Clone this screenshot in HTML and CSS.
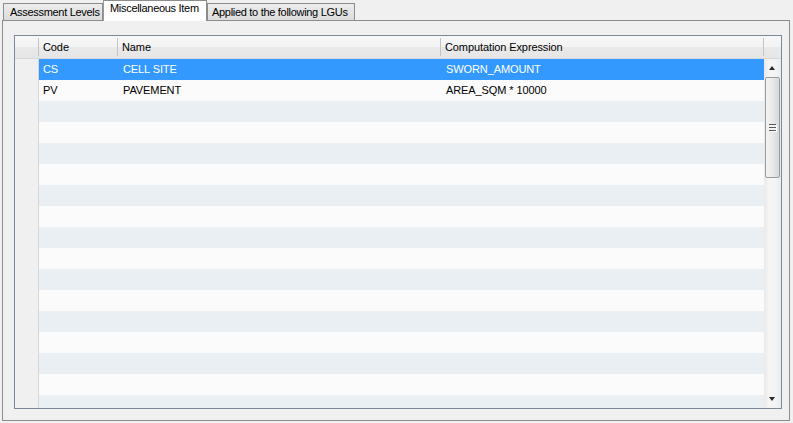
FILE: index.html
```html
<!DOCTYPE html>
<html>
<head>
<meta charset="utf-8">
<link rel="stylesheet" href="styles.css">
</head>
<body>
<div class="window">
  <div class="tabs">
    <div class="tab tab-1">Assessment Levels</div>
    <div class="tab tab-active tab-2">Miscellaneous Item</div>
    <div class="tab tab-3">Applied to the following LGUs</div>
  </div>
  <div class="panel">
    <div class="grid">
      <div class="head">
        <div class="hcell h-corner"></div>
        <div class="hcell h-code">Code</div>
        <div class="hcell h-name">Name</div>
        <div class="hcell h-expr">Computation Expression</div>
        <div class="hcell h-scroll"></div>
      </div>
      <div class="body">
        <div class="rowheads"></div>
        <div class="rows">
          <div class="row selected"><span class="c-code">CS</span><span class="c-name">CELL SITE</span><span class="c-expr">SWORN_AMOUNT</span></div>
          <div class="row"><span class="c-code">PV</span><span class="c-name">PAVEMENT</span><span class="c-expr">AREA_SQM * 10000</span></div>
          <div class="row alt"></div>
          <div class="row"></div>
          <div class="row alt"></div>
          <div class="row"></div>
          <div class="row alt"></div>
          <div class="row"></div>
          <div class="row alt"></div>
          <div class="row"></div>
          <div class="row alt"></div>
          <div class="row"></div>
          <div class="row alt"></div>
          <div class="row"></div>
          <div class="row alt"></div>
          <div class="row"></div>
          <div class="row alt"></div>
        </div>
        <div class="scrollbar">
          <div class="arrow arrow-up"></div>
          <div class="thumb"><div class="grip"></div></div>
          <div class="track"></div>
          <div class="arrow arrow-down"></div>
        </div>
      </div>
    </div>
  </div>
</div>
</body>
</html>
```
FILE: styles.css
```css
html, body {
  margin: 0;
  padding: 0;
  background: #f0f0f0;
}
body {
  font-family: "Liberation Sans", Arial, sans-serif;
  font-size: 11px;
  letter-spacing: -0.1px;
  color: #000;
  width: 793px;
  height: 423px;
  overflow: hidden;
}
.window {
  padding: 0 3px 0 2px;
}
.tabs {
  display: flex;
  height: 20px;
  padding-left: 1px;
  align-items: flex-end;
}
.tab {
  box-sizing: border-box;
  height: 17px;
  border: 1px solid #8c8c8c;
  border-bottom: none;
  background: linear-gradient(#ececec, #dcdcdc);
  padding: 2px 0 0 6px;
  line-height: 13px;
  white-space: nowrap;
  letter-spacing: -0.3px;
  overflow: hidden;
}
.tab-1 { width: 100px; }
.tab-2 { width: 104px; }
.tab-3 { width: 148px; padding-left: 4px; }
.tab-active {
  height: 21px;
  margin-bottom: -1px;
  position: relative;
  z-index: 1;
  background: #ffffff;
  padding-top: 1px;
  border-left-color: #9a9a9a;
}
.panel {
  box-sizing: border-box;
  height: 401px;
  border: 1px solid #8c8c8c;
  background: #f0f0f0;
  padding: 14px 7px 11px 11px;
}
.grid {
  box-sizing: border-box;
  height: 374px;
  border: 1px solid #7a8a9a;
  display: flex;
  flex-direction: column;
  overflow: hidden;
}
.head {
  display: flex;
  height: 22px;
  border-bottom: 1px solid #d8d8d8;
  background: linear-gradient(#f7f7f7 0%, #f3f3f3 48%, #e9e9e9 52%, #e6e6e6 100%);
  flex: none;
}
.hcell {
  box-sizing: border-box;
  position: relative;
  line-height: 22px;
  padding-left: 4px;
  white-space: nowrap;
}
.hcell::after {
  content: "";
  position: absolute;
  right: 0;
  top: 2px;
  bottom: 2px;
  width: 1px;
  background: #c4c4c4;
}
.h-corner { width: 24px; }
.h-code { width: 79px; }
.h-name { width: 323px; }
.h-expr { width: 323px; }
.h-scroll { width: 17px; }
.h-scroll::after { display: none; }
.body {
  display: flex;
  flex: 1;
  min-height: 0;
}
.rowheads {
  width: 23px;
  border-right: 1px solid #d6d6d6;
  background: #f0f0f0;
  flex: none;
}
.rows {
  width: 725px;
  overflow: hidden;
  flex: none;
}
.row {
  display: flex;
  height: 21px;
  line-height: 21px;
  background: #fbfbfb;
  white-space: nowrap;
}
.row.alt { background: #eaeff3; }
.row.selected { background: #3399ff; color: #ffffff; }
.c-code { width: 79px; padding-left: 4px; box-sizing: border-box; }
.c-name { width: 323px; padding-left: 5px; box-sizing: border-box; }
.c-expr { width: 323px; padding-left: 5px; box-sizing: border-box; }
.scrollbar {
  width: 17px;
  flex: none;
  display: flex;
  flex-direction: column;
  align-items: center;
  background: linear-gradient(90deg, #e9e9e9, #f5f5f5 30%, #f3f3f3 70%, #ebebeb);
}
.arrow {
  height: 18px;
  width: 17px;
  position: relative;
  flex: none;
}
.arrow::after {
  content: "";
  position: absolute;
  left: 5px;
  width: 0;
  height: 0;
  border-left: 3.5px solid transparent;
  border-right: 3.5px solid transparent;
}
.arrow-up::after {
  top: 7px;
  border-bottom: 4px solid #2a2a2a;
}
.arrow-down::after {
  top: 7px;
  border-top: 4px solid #2a2a2a;
}
.thumb {
  box-sizing: border-box;
  width: 15px;
  height: 101px;
  border: 1px solid #9b9b9b;
  border-radius: 2px;
  background: linear-gradient(90deg, #f4f4f4, #e9e9e9 50%, #d8d8d8);
  display: flex;
  align-items: center;
  justify-content: center;
  flex: none;
}
.grip {
  width: 7px;
  height: 7px;
  background: repeating-linear-gradient(#5a5a5a 0 1px, #f2f2f2 1px 3px);
  box-shadow: 1px 1px 0 #ffffff;
}
.track { flex: 1; }
```
